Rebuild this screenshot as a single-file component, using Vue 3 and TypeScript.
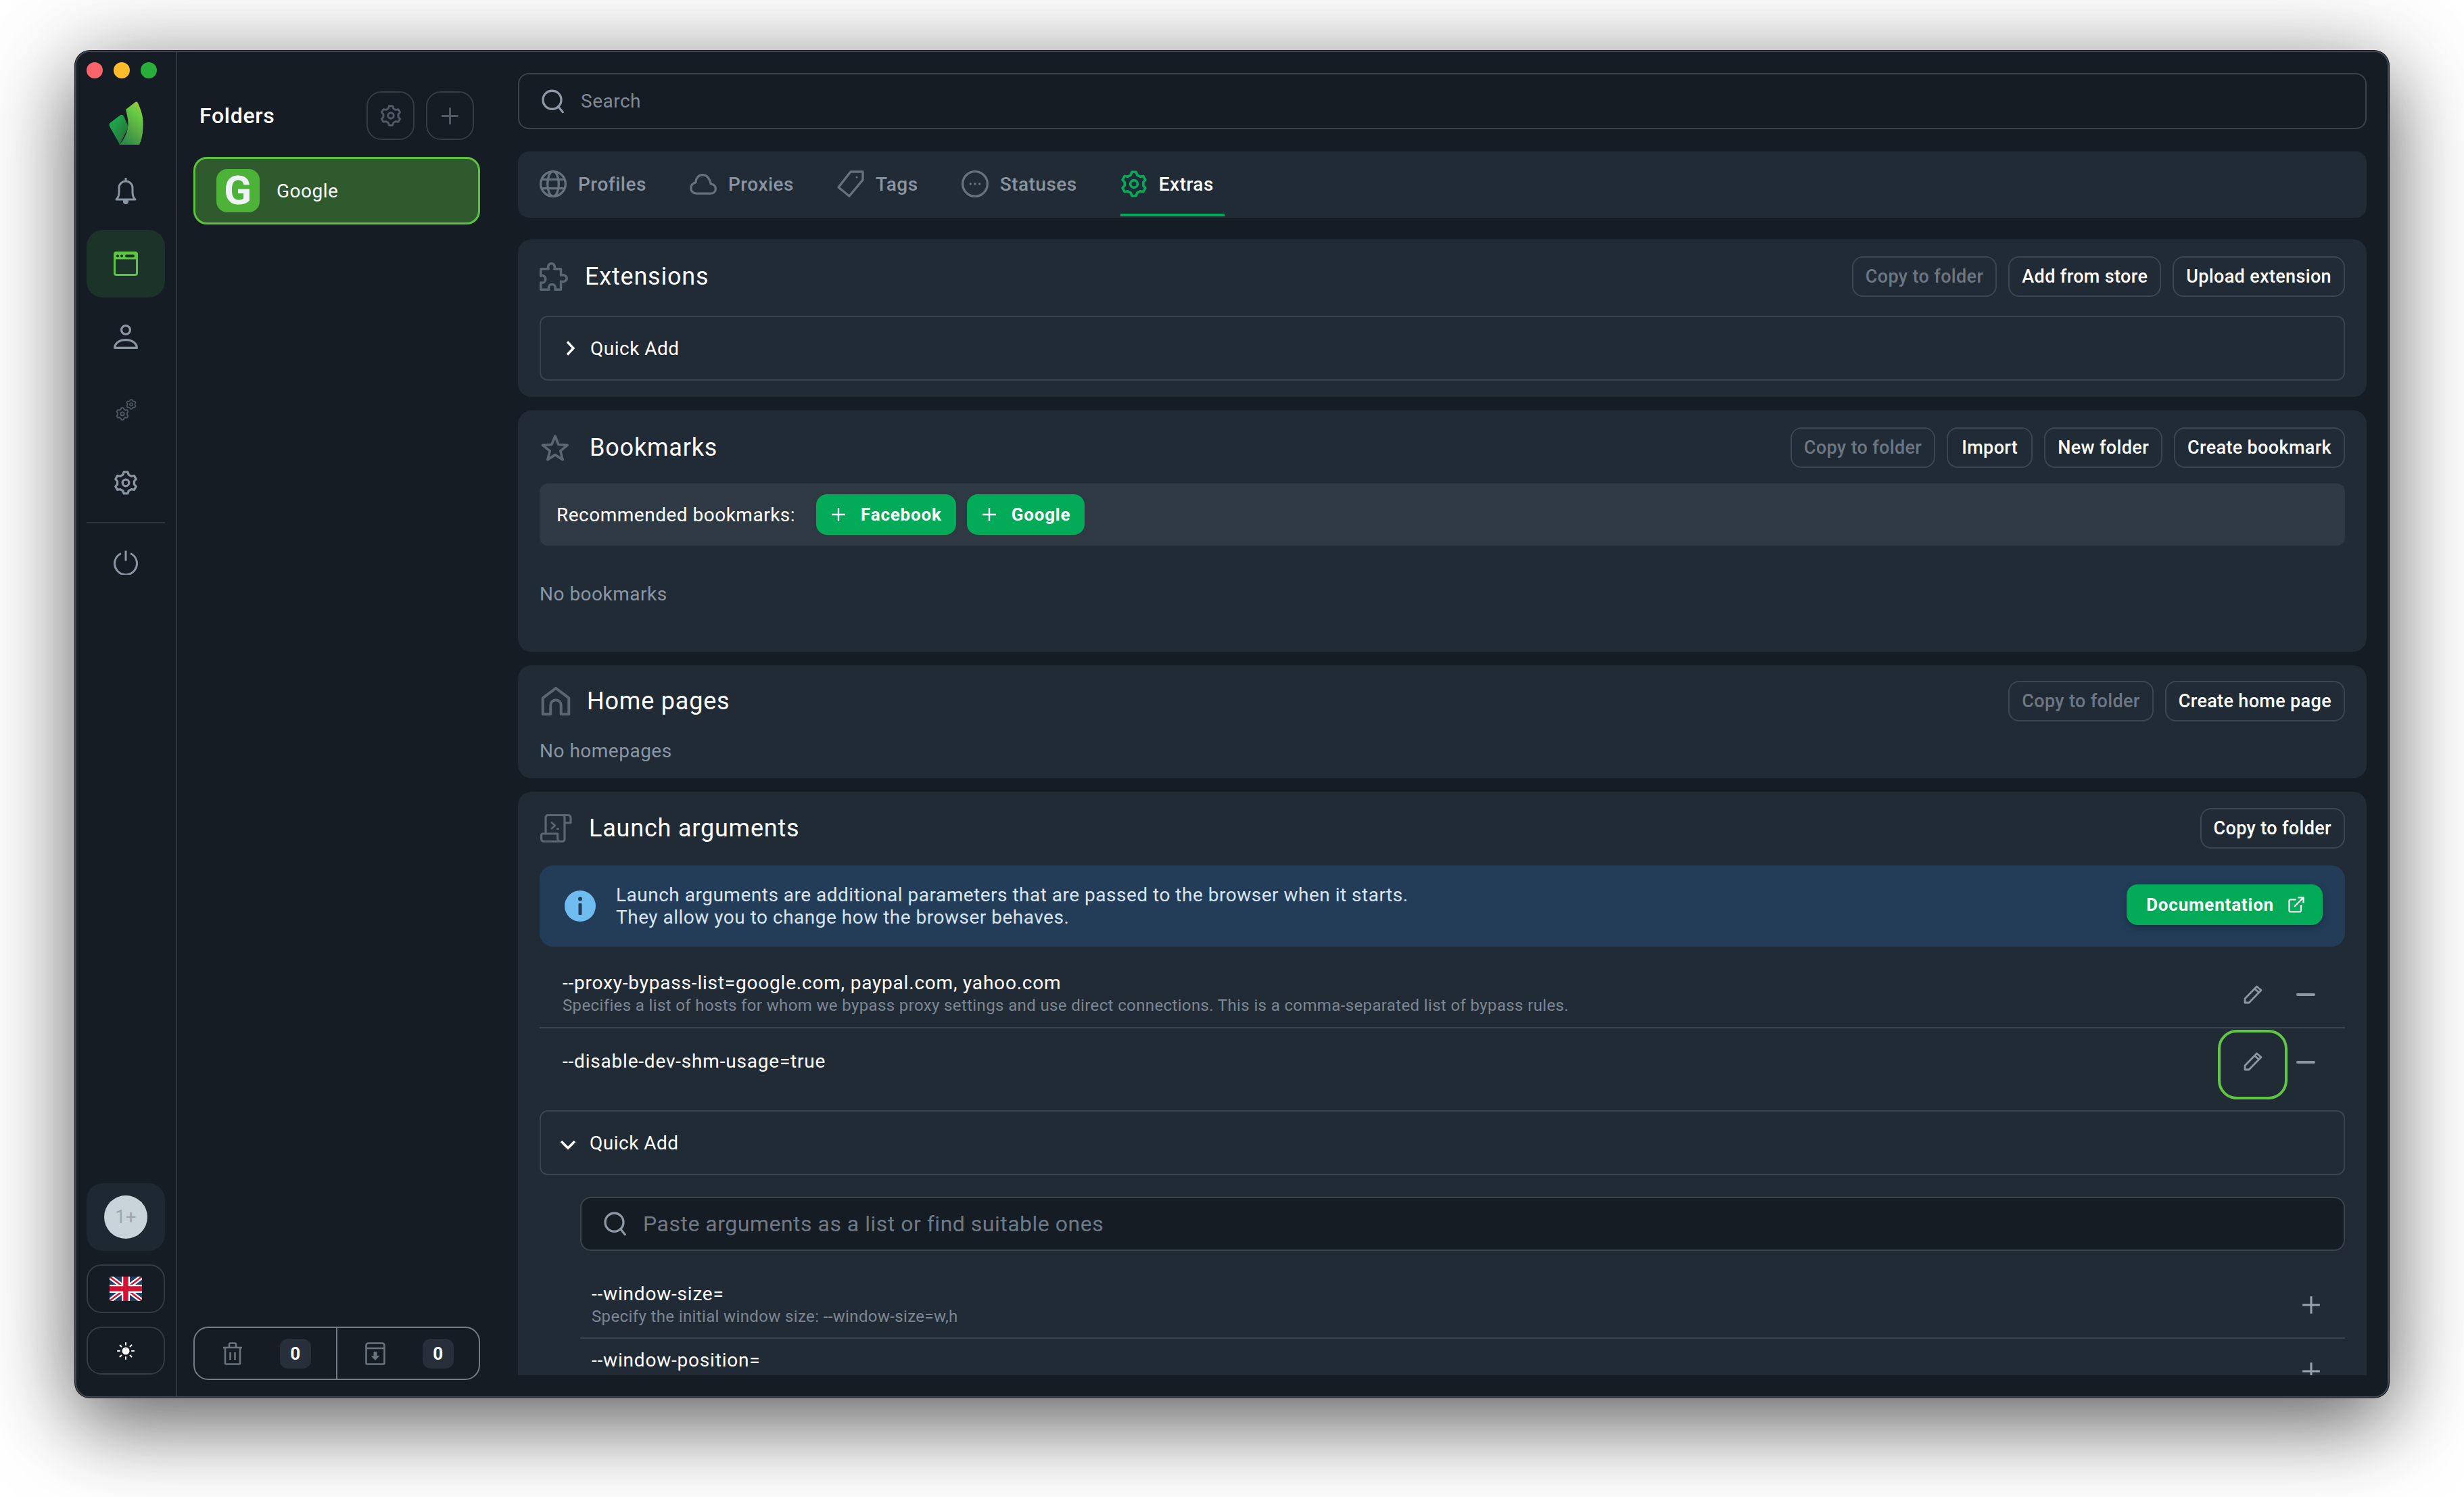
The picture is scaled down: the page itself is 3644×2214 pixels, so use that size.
<script setup lang="ts">
interface Arg {
  name: string
  desc?: string
}

// six toothed outline, shared by every gear icon
const gearPath = (() => {
  const pt = (deg: number, r: number) => {
    const a = (deg * Math.PI) / 180
    return `${(12 + r * Math.cos(a)).toFixed(2)} ${(12 + r * Math.sin(a)).toFixed(2)}`
  }
  let d = ''
  for (let i = 0; i < 6; i++) {
    const c = i * 60 - 90
    d += `${i ? 'L' : 'M'}${pt(c - 20, 8.4)} L${pt(c - 10, 10.8)} L${pt(c + 10, 10.8)} L${pt(c + 20, 8.4)} `
  }
  return d + 'Z'
})()

const tabs = [
  { label: 'Profiles', icon: 'i-globe' },
  { label: 'Proxies', icon: 'i-cloud' },
  { label: 'Tags', icon: 'i-tag' },
  { label: 'Statuses', icon: 'i-status' },
  { label: 'Extras', icon: 'i-gear', active: true },
]

const savedArgs: Arg[] = [
  {
    name: '--proxy-bypass-list=google.com, paypal.com, yahoo.com',
    desc: 'Specifies a list of hosts for whom we bypass proxy settings and use direct connections. This is a comma-separated list of bypass rules.',
  },
  { name: '--disable-dev-shm-usage=true' },
]

const suggestedArgs: Arg[] = [
  { name: '--window-size=', desc: 'Specify the initial window size: --window-size=w,h' },
  { name: '--window-position=' },
]
</script>

<template>
  <div class="page">
    <svg class="sprite" aria-hidden="true">
      <defs>
        <symbol id="i-search" viewBox="0 0 24 24" fill="none" stroke="currentColor" stroke-width="2.2">
          <circle cx="11" cy="10.5" r="9" />
          <path d="M17 17l4.5 5.5" stroke-linecap="round" />
        </symbol>
        <symbol id="i-gear" viewBox="0 0 24 24" fill="none" stroke="currentColor" stroke-width="2.2" stroke-linejoin="round">
          <path :d="gearPath" />
          <circle cx="12" cy="12" r="3.2" />
        </symbol>
        <symbol id="i-plus" viewBox="0 0 24 24" fill="none" stroke="currentColor" stroke-width="2.6">
          <path d="M12 1v22M1 12h22" />
        </symbol>
        <symbol id="i-globe" viewBox="0 0 24 24" fill="none" stroke="currentColor" stroke-width="2">
          <circle cx="12" cy="12" r="11" />
          <ellipse cx="12" cy="12" rx="5" ry="11" />
          <path d="M2 8h20M2 16h20" />
        </symbol>
        <symbol id="i-cloud" viewBox="0 0 24 24" fill="none" stroke="currentColor" stroke-width="2" stroke-linejoin="round">
          <path d="M6 20.5h12.5c2.5 0 4.5-1.6 4.5-4.2 0-2.4-1.9-4.2-4.2-4.2C18 7.6 15.300 4 11.500 4 7.600 4 5.400 7.300 5.300 10.700 2.800 11.300 1 13.300 1 15.800c0 2.700 2.200 4.700 5 4.700z" />
        </symbol>
        <symbol id="i-tag" viewBox="0 0 40 40" fill="none" stroke="currentColor" stroke-width="3.4" stroke-linejoin="round">
          <path d="M20 2h18v12L18 38 2 25z" />
          <circle cx="29" cy="10" r="1.6" fill="currentColor" stroke="none" />
        </symbol>
        <symbol id="i-status" viewBox="0 0 24 24" fill="none" stroke="currentColor" stroke-width="2">
          <circle cx="12" cy="12" r="11" />
          <g fill="currentColor" stroke="none">
            <circle cx="8" cy="12" r="1" />
            <circle cx="12" cy="12" r="1" />
            <circle cx="16" cy="12" r="1" />
          </g>
        </symbol>
        <symbol id="i-puzzle" viewBox="0 0 24 24" fill="none" stroke="currentColor" stroke-width="2" stroke-linejoin="round">
          <path d="M1 5.500h6.500C6.500 3 8 1 10 1s3.500 2 2.500 4.500H18V11c2.500-1 5 .500 5 2.500S20.500 17 18 16v7h-5c1-2.500-.5-4.500-2.500-4.500S7 20.500 8 23H1v-6c2.500 1 4-.800 4-2.800S3.500 10.500 1 11.500z" />
        </symbol>
        <symbol id="i-star" viewBox="0 0 24 24" fill="none" stroke="currentColor" stroke-width="2.200" stroke-linejoin="round">
          <path d="M12 1.800l2.900 7.500 8 .5-6.200 5.100 2 7.800-6.700-4.300-6.700 4.300 2-7.800L.9 9.800l8-.5z" />
        </symbol>
        <symbol id="i-home" viewBox="0 0 24 24" fill="none" stroke="currentColor" stroke-width="2.200" stroke-linejoin="round">
          <path d="M1.500 22.500V9.500L12 1.500l10.500 8v13h-6.300v-7.300a4.200 4.200 0 0 0-8.400 0v7.300z" />
        </symbol>
        <symbol id="i-script" viewBox="0 0 47 42" fill="none" stroke="currentColor" stroke-width="3.200" stroke-linejoin="round">
          <path d="M8 29V5a3.500 3.500 0 0 1 3.500-3.500h29.500a4 4 0 0 1 4 4V13H36V5a3.500 3.500 0 0 0-3.500-3.500M36 13v24a3.500 3.500 0 0 1-3.500 3.500H5.500A4 4 0 0 1 1.600 36.500V31a2 2 0 0 1 2-2h22v7.500a4 4 0 0 0 4 4" />
          <path d="M16 12l6 5-6 5M24 22h4" stroke-width="2.400" />
        </symbol>
        <symbol id="i-pencil" viewBox="0 0 28 28" fill="none" stroke="currentColor" stroke-width="2.800" stroke-linejoin="round">
          <path d="M2 26v-6L19.500 2 26 7.500 8 26zM16.500 5.500L23 11" />
        </symbol>
        <symbol id="i-link" viewBox="0 0 24 24" fill="none" stroke="currentColor" stroke-width="2.200">
          <path d="M12 4.500H3.500a2 2 0 0 0-2 2v14a2 2 0 0 0 2 2h13.500a2 2 0 0 0 2-2V12M9 15L22 2M14.500 1.500h8v8" />
        </symbol>
      </defs>
    </svg>

    <div class="window">
      <aside class="rail">
        <div class="lights">
          <i class="light red"></i>
          <i class="light amber"></i>
          <i class="light green"></i>
        </div>
        <svg class="logo" viewBox="0 0 52 64">
          <defs>
            <linearGradient id="leaf-big" x1="0.8" y1="0" x2="0.3" y2="1">
              <stop offset="0" stop-color="#a6c63b" />
              <stop offset="0.25" stop-color="#66cb44" />
              <stop offset="0.6" stop-color="#56a845" />
              <stop offset="1" stop-color="#2c8a48" />
            </linearGradient>
            <linearGradient id="leaf-small" x1="0.2" y1="0.2" x2="0.9" y2="0.9">
              <stop offset="0" stop-color="#1ea84b" />
              <stop offset="1" stop-color="#2b6b3a" />
            </linearGradient>
          </defs>
          <path d="M1 32.500L16.500 20.500c2-1.500 4-1 5.500 1L29 38 16 64C13 57 4 43 .5 35.500z" fill="url(#leaf-small)" />
          <path d="M25 12L39 1c1.500-1 3-.8 3.800 1C47.500 12 52 24 50.500 40 50 50 48 58 45 64H16c7-9 13-20 12.500-32C28 24 26.500 18 25 12z" fill="url(#leaf-big)" />
        </svg>

        <nav class="rail-nav">
          <a class="rail-tile">
            <svg class="bell" viewBox="0 0 32 40" fill="none" stroke="currentColor" stroke-width="3">
              <path d="M16 1v4M2 33c3-3 4-6 4-10v-7a10 10 0 0 1 20 0v7c0 4 1 7 4 10z" stroke-linejoin="round" />
              <path d="M12 34h8v2a4 4 0 0 1-8 0z" fill="currentColor" stroke="none" />
            </svg>
          </a>
          <a class="rail-tile active">
            <svg class="rail-icon" viewBox="0 0 36 36">
              <rect x="1.500" y="1.500" width="33" height="33" rx="2.500" fill="none" stroke="#5ec443" stroke-width="3" />
              <rect x="1.500" y="1.500" width="33" height="10" fill="#5ec443" />
              <circle cx="6" cy="6.500" r="2" fill="#1b3329" />
              <circle cx="12" cy="6.500" r="2" fill="#1b3329" />
              <rect x="17" y="4.500" width="14" height="4" rx="2" fill="#1b3329" />
            </svg>
          </a>
          <a class="rail-tile">
            <svg class="rail-icon" viewBox="0 0 36 36" fill="none" stroke="currentColor" stroke-width="3.200">
              <circle cx="18" cy="8" r="6.400" />
              <path d="M1.600 34.400c0-6.500 7-11.800 16.400-11.800s16.400 5.300 16.400 11.800z" stroke-linejoin="round" />
            </svg>
          </a>
          <a class="rail-tile dim">
            <svg class="gears" viewBox="0 0 32 32">
              <use href="#i-gear" x="1" y="12" width="20" height="20" />
              <use href="#i-gear" x="16" y="0" width="16" height="16" />
            </svg>
          </a>
          <a class="rail-tile">
            <svg class="rail-icon"><use href="#i-gear" /></svg>
          </a>
          <div class="rail-line"></div>
          <a class="rail-tile">
            <svg class="rail-icon" viewBox="0 0 36 36" fill="none" stroke="currentColor" stroke-width="3">
              <path d="M11 4.500a16.500 16.500 0 1 0 14 0" />
              <path d="M18 .5v15" />
            </svg>
          </a>
        </nav>

        <div class="rail-bottom">
          <div class="avatar-tile"><span class="avatar">1+</span></div>
          <button class="rail-btn flag-btn">
            <svg class="flag" viewBox="0 0 48 36">
              <rect width="48" height="36" fill="#243f66" />
              <path d="M0 0l48 36M48 0L0 36" stroke="#fff" stroke-width="7" />
              <path d="M0 0l48 36M48 0L0 36" stroke="#cf1233" stroke-width="2.500" />
              <path d="M24 0v36M0 18h48" stroke="#fff" stroke-width="12" />
              <path d="M24 0v36M0 18h48" stroke="#cf1233" stroke-width="7.500" />
            </svg>
          </button>
          <button class="rail-btn sun-btn">
            <svg class="sun" viewBox="0 0 26 26" fill="none" stroke="#fff" stroke-width="2" stroke-linecap="round">
              <circle cx="13" cy="13" r="5.500" fill="#fff" stroke="none" />
              <path d="M13 1v3M13 22v3M1 13h3M22 13h3M4.500 4.500l2 2M19.500 19.500l2 2M21.500 4.500l-2 2M6.500 19.500l-2 2" />
            </svg>
          </button>
        </div>
      </aside>

      <section class="folders">
        <header class="folders-head">
          <h2>Folders</h2>
          <button class="square-btn"><svg class="square-gear"><use href="#i-gear" /></svg></button>
          <button class="square-btn"><svg class="square-plus"><use href="#i-plus" /></svg></button>
        </header>
        <div class="folder-item">
          <span class="folder-badge">G</span>
          <span>Google</span>
        </div>
        <div class="counters">
          <div class="counter">
            <svg class="counter-icon" viewBox="0 0 30 34" fill="none" stroke="currentColor" stroke-width="2.600" stroke-linejoin="round">
              <path d="M1 8h28M10 8V3.500a2 2 0 0 1 2-2h6a2 2 0 0 1 2 2V8M4 8v23a1.500 1.500 0 0 0 1.500 1.500h19A1.500 1.500 0 0 0 26 31V8M11.500 15v11M18.500 15v11" />
            </svg>
            <span class="count">0</span>
          </div>
          <div class="counter">
            <svg class="counter-icon" viewBox="0 0 30 34" fill="none" stroke="currentColor" stroke-width="2.600" stroke-linejoin="round">
              <path d="M1.500 9V5c0-2 1.500-3.500 3.500-3.500h20c2 0 3.500 1.500 3.500 3.500v4M1.500 9h27v22a1.500 1.500 0 0 1-1.500 1.500H3A1.500 1.500 0 0 1 1.500 31z" />
              <path d="M12.500 14h5v6h4L15 27l-6.500-7h4z" fill="currentColor" stroke="none" />
            </svg>
            <span class="count">0</span>
          </div>
        </div>
      </section>

      <main class="main">
        <label class="search">
          <svg class="search-icon"><use href="#i-search" /></svg>
          <span>Search</span>
        </label>

        <nav class="tabs">
          <a v-for="tab in tabs" :key="tab.label" class="tab" :class="{ active: tab.active }">
            <svg class="tab-icon"><use :href="'#' + tab.icon" /></svg>
            <span>{{ tab.label }}</span>
          </a>
        </nav>

        <div class="scroll">
          <section class="card">
            <header class="card-head">
              <svg class="head-icon puzzle"><use href="#i-puzzle" /></svg>
              <h3>Extensions</h3>
              <div class="actions">
                <button class="btn off">Copy to folder</button>
                <button class="btn">Add from store</button>
                <button class="btn">Upload extension</button>
              </div>
            </header>
            <div class="quick">
              <svg class="chev-right" viewBox="0 0 14 22" fill="none" stroke="#fff" stroke-width="3.400"><path d="M2 1.500L11 11l-9 9.500" /></svg>
              <span>Quick Add</span>
            </div>
          </section>

          <section class="card">
            <header class="card-head">
              <svg class="head-icon star"><use href="#i-star" /></svg>
              <h3>Bookmarks</h3>
              <div class="actions">
                <button class="btn off">Copy to folder</button>
                <button class="btn import">Import</button>
                <button class="btn">New folder</button>
                <button class="btn">Create bookmark</button>
              </div>
            </header>
            <div class="recommended">
              <span class="rec-label">Recommended bookmarks:</span>
              <button class="green-btn"><svg class="green-plus"><use href="#i-plus" /></svg>Facebook</button>
              <button class="green-btn"><svg class="green-plus"><use href="#i-plus" /></svg>Google</button>
            </div>
            <p class="empty book-empty">No bookmarks</p>
          </section>

          <section class="card home-card">
            <header class="card-head">
              <svg class="head-icon home"><use href="#i-home" /></svg>
              <h3>Home pages</h3>
              <div class="actions">
                <button class="btn off">Copy to folder</button>
                <button class="btn">Create home page</button>
              </div>
            </header>
            <p class="empty home-empty">No homepages</p>
          </section>

          <section class="card launch">
            <header class="card-head">
              <svg class="head-icon scroll-icon"><use href="#i-script" /></svg>
              <h3>Launch arguments</h3>
              <div class="actions">
                <button class="btn">Copy to folder</button>
              </div>
            </header>
            <div class="info">
              <svg class="info-icon" viewBox="0 0 46 46">
                <circle cx="23" cy="23" r="23" fill="#6ebcf0" />
                <circle cx="23" cy="12.500" r="3" fill="#233d58" />
                <rect x="20.500" y="19" width="5" height="17" rx="1" fill="#233d58" />
              </svg>
              <p>
                Launch arguments are additional parameters that are passed to the browser when it starts.<br />
                They allow you to change how the browser behaves.
              </p>
              <button class="green-btn doc">
                Documentation
                <svg class="doc-icon"><use href="#i-link" /></svg>
              </button>
            </div>

            <div class="arg-list">
              <div v-for="(arg, i) in savedArgs" :key="arg.name" class="arg" :class="{ 'no-desc': !arg.desc }">
                <div class="arg-text">
                  <div class="arg-name">{{ arg.name }}</div>
                  <div v-if="arg.desc" class="arg-desc">{{ arg.desc }}</div>
                </div>
                <span class="edit" :class="{ focused: i === 1 }"><svg class="pencil"><use href="#i-pencil" /></svg></span>
                <span class="minus"></span>
              </div>
            </div>

            <div class="quick open">
              <svg class="chev-down" viewBox="0 0 24 14" fill="none" stroke="#fff" stroke-width="3.800"><path d="M2 2l10 10L22 2" /></svg>
              <span>Quick Add</span>
            </div>

            <div class="suggest">
              <label class="arg-search">
                <svg class="search-icon"><use href="#i-search" /></svg>
                <span>Paste arguments as a list or find suitable ones</span>
              </label>
              <div v-for="arg in suggestedArgs" :key="arg.name" class="sug-row">
                <div class="arg-text">
                  <div class="arg-name">{{ arg.name }}</div>
                  <div v-if="arg.desc" class="arg-desc">{{ arg.desc }}</div>
                </div>
                <svg class="sug-plus"><use href="#i-plus" /></svg>
              </div>
            </div>
          </section>
        </div>
      </main>
    </div>
  </div>
</template>

<style>
html,
body {
  margin: 0;
  background: #fff;
}
</style>

<style scoped>
.page {
  width: 3644px;
  height: 2214px;
  padding: 75px 0 0 111px;
  box-sizing: border-box;
  overflow: hidden;
  background: #fff;
  font-family: Roboto, 'Liberation Sans', sans-serif;
  letter-spacing: 0.5px;
  color: #fff;
}

.sprite {
  position: absolute;
  width: 0;
  height: 0;
}

button {
  font-family: inherit;
  letter-spacing: inherit;
  cursor: pointer;
  color: inherit;
}

h2,
h3,
p {
  margin: 0;
  font-weight: 400;
}

.window {
  width: 3422px;
  height: 1992px;
  box-sizing: border-box;
  display: flex;
  background: #151c24;
  border: 2px solid #3f4853;
  border-radius: 22px;
  overflow: hidden;
  box-shadow:
    0 0 0 1px #15181d,
    0 40px 120px rgba(0, 0, 0, 0.55),
    0 0 160px rgba(0, 0, 0, 0.16);
}

/* left rail */
.rail {
  width: 149px;
  flex-shrink: 0;
  box-sizing: border-box;
  padding: 15px 16px 32px 15px;
  border-right: 2px solid #2d3641;
  display: flex;
  flex-direction: column;
  color: #8a96a3;
}

.lights {
  display: flex;
  gap: 16px;
}

.light {
  width: 24px;
  height: 24px;
  border-radius: 50%;
}

.red {
  background: #f9646a;
}
.amber {
  background: #febb2c;
}
.green {
  background: #28ae3b;
}

.logo {
  width: 52px;
  height: 64px;
  margin: 34px 0 18px 33px;
}

.rail-nav {
  display: flex;
  flex-direction: column;
  gap: 8px;
}

.rail-tile {
  height: 100px;
  border-radius: 24px;
  display: flex;
  align-items: center;
  justify-content: center;
}

.rail-tile.active {
  background: #1b3329;
}

.rail-tile.dim {
  color: #505b67;
}

.bell {
  width: 32px;
  height: 40px;
}

.rail-icon {
  width: 36px;
  height: 36px;
}

.gears {
  width: 32px;
  height: 32px;
}

.rail-line {
  height: 2px;
  background: #2d3641;
}

.rail-bottom {
  margin-top: auto;
  display: flex;
  flex-direction: column;
  gap: 20px;
}

.avatar-tile {
  height: 100px;
  border-radius: 24px;
  background: #1e2833;
  display: flex;
  align-items: center;
  justify-content: center;
}

.avatar {
  width: 64px;
  height: 64px;
  border-radius: 50%;
  background: #c8d3da;
  color: #99a7b0;
  font-size: 27px;
  line-height: 64px;
  text-align: center;
}

.rail-btn {
  height: 72px;
  padding: 0;
  background: none;
  border: 2px solid #333c47;
  border-radius: 22px;
  display: flex;
  align-items: center;
  justify-content: center;
}

.sun-btn {
  height: 71px;
}

.flag {
  width: 48px;
  height: 36px;
  border-radius: 4px;
}

.sun {
  width: 26px;
  height: 26px;
}

/* folders column */
.folders {
  width: 504px;
  flex-shrink: 0;
  box-sizing: border-box;
  padding: 58px 56px 24px 24px;
  display: flex;
  flex-direction: column;
}

.folders-head {
  display: flex;
  align-items: center;
  gap: 17px;
  padding: 0 9px;
  margin-bottom: 25px;
}

.folders-head h2 {
  flex: 1;
  font-size: 32px;
  font-weight: 500;
  letter-spacing: 0.7px;
}

.square-btn {
  width: 71px;
  height: 72px;
  padding: 0;
  background: none;
  border: 2px solid #333c47;
  border-radius: 22px;
  display: flex;
  align-items: center;
  justify-content: center;
  color: #4f5a66;
}

.square-gear {
  width: 32px;
  height: 32px;
}

.square-plus {
  width: 27px;
  height: 27px;
}

.folder-item {
  height: 100px;
  box-sizing: border-box;
  padding: 0 31px;
  display: flex;
  align-items: center;
  gap: 25px;
  background: #2f5a2e;
  border: 3px solid #5cc23f;
  border-radius: 20px;
  font-size: 28px;
}

.folder-badge {
  width: 64px;
  height: 64px;
  border-radius: 16px;
  background: #4cb338;
  color: #eef3f6;
  font-size: 60px;
  font-weight: 700;
  line-height: 64px;
  text-align: center;
}

.counters {
  margin-top: auto;
  height: 79px;
  display: flex;
  box-sizing: border-box;
  border: 2px solid #727c88;
  border-radius: 22px;
}

.counter {
  flex: 1;
  display: flex;
  align-items: center;
  justify-content: space-between;
  padding: 0 37px 0 41px;
  color: #69747f;
}

.counter + .counter {
  border-left: 2px solid #727c88;
}

.counter-icon {
  width: 30px;
  height: 34px;
}

.count {
  width: 46px;
  height: 44px;
  border-radius: 12px;
  background: #262f3a;
  color: #fff;
  font-size: 26px;
  font-weight: 700;
  line-height: 44px;
  text-align: center;
}

/* main column */
.main {
  flex: 1;
  min-width: 0;
  box-sizing: border-box;
  padding: 31px 31px 31px 0;
  display: flex;
  flex-direction: column;
}

.search {
  height: 83px;
  flex-shrink: 0;
  box-sizing: border-box;
  padding: 0 32px;
  display: flex;
  align-items: center;
  gap: 23px;
  border: 2px solid #3a424d;
  border-radius: 16px;
  color: #7f8a96;
  font-size: 28px;
}

.search-icon {
  width: 36px;
  height: 36px;
  color: #8d99a6;
  flex-shrink: 0;
}

.tabs {
  height: 98px;
  flex-shrink: 0;
  margin: 33px 0 32px;
  padding: 0 32px;
  box-sizing: border-box;
  display: flex;
  gap: 48px;
  background: #212b36;
  border-radius: 16px;
}

.tab {
  display: flex;
  align-items: center;
  gap: 17px;
  padding: 4px 16px 0 0;
  height: 96px;
  box-sizing: border-box;
  color: #8a95a1;
  font-size: 28px;
  font-weight: 500;
  letter-spacing: 0.5px;
  border-bottom: 4px solid transparent;
}

.tab.active {
  color: #fff;
  border-bottom-color: #03ab58;
}

.tab-icon {
  width: 40px;
  height: 40px;
  color: #66717e;
}

.tab.active .tab-icon {
  color: #03ab58;
}

.scroll {
  flex: 1;
  min-height: 0;
  overflow: hidden;
  display: flex;
  flex-direction: column;
  gap: 20px;
}

.card {
  flex-shrink: 0;
  box-sizing: border-box;
  padding: 25px 32px 24px;
  background: #212b36;
  border-radius: 20px;
}

.home-card {
  padding-top: 23px;
}

.launch {
  padding-top: 24px;
}

.card-head {
  height: 60px;
  display: flex;
  align-items: center;
}

.card-head h3 {
  flex: 1;
  font-size: 36px;
  letter-spacing: 0.8px;
}

.head-icon {
  color: #5b6673;
  flex-shrink: 0;
}

.puzzle {
  width: 42px;
  height: 42px;
  margin-right: 25px;
}

.star {
  width: 42px;
  height: 40px;
  margin: 0 30px 0 2px;
}

.home {
  width: 44px;
  height: 44px;
  margin: 0 24px 0 2px;
}

.scroll-icon {
  width: 47px;
  height: 42px;
  margin: 0 25px 0 1px;
}

.actions {
  display: flex;
  gap: 17px;
}

.btn {
  height: 60px;
  box-sizing: border-box;
  padding: 0 18px;
  background: none;
  border: 2px solid #3c4652;
  border-radius: 16px;
  font-size: 27px;
  font-weight: 500;
  letter-spacing: 0.35px;
}

.btn.import {
  padding: 0 20px;
}

.btn.off {
  color: #6c7783;
}

.quick {
  height: 96px;
  margin-top: 28px;
  box-sizing: border-box;
  padding: 0 0 0 37px;
  display: flex;
  align-items: center;
  gap: 22px;
  border: 2px solid #3a444f;
  border-radius: 12px;
  font-size: 28px;
}

.chev-right {
  width: 14px;
  height: 22px;
}

.recommended {
  height: 92px;
  margin-top: 23px;
  padding: 0 25px;
  display: flex;
  align-items: center;
  background: #2e3944;
  border-radius: 12px;
}

.rec-label {
  font-size: 28px;
  margin-right: 31px;
}

.green-btn {
  height: 60px;
  padding: 0 21px 0 22px;
  margin-right: 16px;
  display: flex;
  align-items: center;
  gap: 22px;
  background: #03ab58;
  border: 0;
  border-radius: 16px;
  font-size: 26px;
  font-weight: 700;
  letter-spacing: 0.8px;
}

.green-plus {
  width: 22px;
  height: 22px;
}

.empty {
  color: #8b96a3;
  font-size: 28px;
  line-height: 32px;
}

.book-empty {
  margin-top: 56px;
  margin-bottom: 45px;
}

.home-empty {
  margin-top: 28px;
}

.info {
  height: 120px;
  margin-top: 25px;
  padding: 0 33px 0 37px;
  display: flex;
  align-items: center;
  background: #233d58;
  border-radius: 20px;
}

.info p {
  flex: 1;
  margin-left: 30px;
  color: #d8e4ee;
  font-size: 28px;
  line-height: 33px;
}

.info-icon {
  width: 46px;
  height: 46px;
  flex-shrink: 0;
}

.doc {
  margin: 0 0 4px;
  padding: 0 27px 0 29px;
  gap: 21px;
  box-shadow: 0 4px 10px rgba(10, 25, 40, 0.4);
}

.doc-icon {
  width: 24px;
  height: 24px;
}

.arg-list {
  margin-top: 17px;
}

.arg {
  display: flex;
  height: 104px;
  box-sizing: border-box;
  padding: 20px 44px 0 34px;
  border-bottom: 2px solid #3a444f;
}

.arg.no-desc {
  border-bottom: 0;
}

.arg.no-desc .arg-text {
  padding-top: 12px;
}

.arg-text {
  flex: 1;
}

.arg-name {
  font-size: 28px;
  line-height: 33px;
  letter-spacing: 0.8px;
}

.arg-desc {
  margin-top: 1px;
  color: #7c8793;
  font-size: 24px;
  line-height: 33px;
  letter-spacing: 0.37px;
}

.edit {
  width: 103px;
  height: 103px;
  box-sizing: border-box;
  margin: -18px 13px 0 0;
  border-radius: 28px;
  display: flex;
  align-items: center;
  justify-content: center;
}

.edit.focused {
  border: 4px solid #62c544;
  margin-top: -18px;
  align-items: flex-start;
  padding-top: 29px;
}

.pencil {
  width: 28px;
  height: 28px;
  color: #8b96a0;
}

.minus {
  width: 28px;
  height: 4px;
  margin-top: 32px;
  border-radius: 2px;
  background: #8b96a0;
}

.no-desc .minus {
  margin-top: 28px;
}

.quick.open {
  margin-top: 17px;
  padding-left: 28px;
  gap: 20px;
}

.chev-down {
  width: 24px;
  height: 14px;
  margin-top: 6px;
}

.suggest {
  margin: 32px 0 0 60px;
}

.arg-search {
  height: 80px;
  box-sizing: border-box;
  padding: 0 32px;
  display: flex;
  align-items: center;
  gap: 23px;
  background: #151c24;
  border: 2px solid #3a444f;
  border-radius: 16px;
  color: #6e7a87;
  font-size: 32px;
}

.sug-row {
  height: 98px;
  padding: 0 36px 0 17px;
  box-sizing: border-box;
  display: flex;
  align-items: center;
  border-bottom: 2px solid #3a444f;
}

.sug-row:first-of-type {
  margin-top: 32px;
}

/* the row's description is scrolled out of view, keep the name on its line */
.sug-row .arg-name:only-child {
  margin-bottom: 34px;
}

.sug-plus {
  width: 28px;
  height: 28px;
  color: #97a3ae;
}
</style>
